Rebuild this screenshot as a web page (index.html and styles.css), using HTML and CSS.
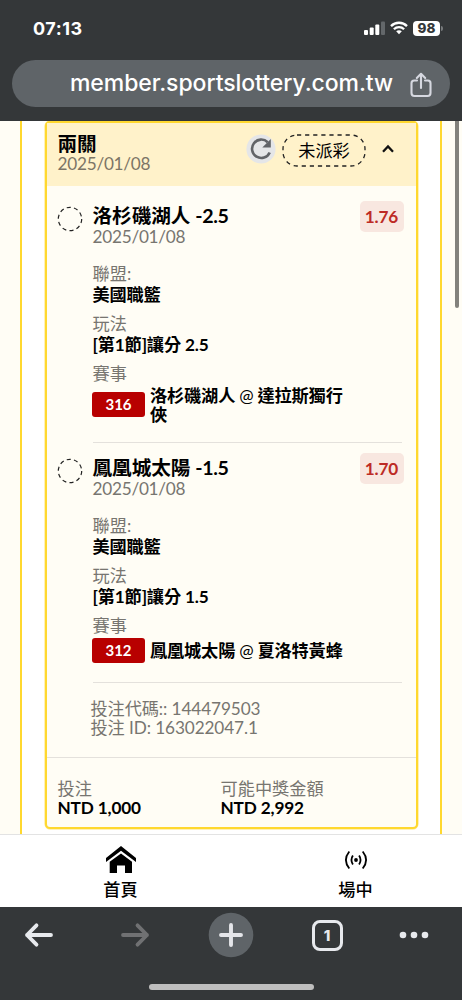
FILE: index.html
```html
<!DOCTYPE html>
<html lang="zh-Hant">
<head>
<meta charset="utf-8">
<title>member.sportslottery.com.tw</title>
<link rel="stylesheet" href="styles.css">
</head>
<body>
<div class="phone">
  <header class="browser-top">
    <div class="status">
      <span class="clock">07:13</span>
      <div class="status-icons">
        <svg class="signal" width="22" height="14" viewBox="0 0 22 14"><rect x="0" y="9" width="4" height="5" rx="1" fill="#fff"/><rect x="5.7" y="6.5" width="4" height="7.5" rx="1" fill="#fff"/><rect x="11.3" y="3.5" width="4" height="10.5" rx="1" fill="#fff"/><rect x="17" y="0.5" width="4" height="13.5" rx="1" fill="#63676a"/></svg>
        <svg class="wifi" width="18" height="14" viewBox="0 0 18 14" fill="none" stroke="#fff" stroke-width="2.3"><path d="M1 5.1C5.4 .6 12.6 .6 17 5.1"/><path d="M3.9 8.2C6.7 5.4 11.3 5.4 14.1 8.2"/><path d="M6.2 10.3C7.8 8.9 10.2 8.9 11.8 10.3L9 13.3Z" fill="#fff" stroke="none"/></svg>
        <span class="battery">98</span><i class="battery-tip"></i>
      </div>
    </div>
    <div class="url-bar">
      <span class="url">member.sportslottery.com.tw</span>
      <svg class="share" width="22" height="26" viewBox="0 0 22 26" fill="none" stroke="#d6d8e0" stroke-width="2.1" stroke-linecap="round" stroke-linejoin="round"><path d="M7 8.5H4.2Q1.5 8.500 1.500 11.200V21Q1.500 24 4.500 24H17.500Q20.500 24 20.500 21V11.200Q20.500 8.500 17.800 8.500H15"/><path d="M11 16V2M6.800 6L11 1.800L15.200 6"/></svg>
    </div>
  </header>

  <main class="page">
    <section class="panel">
      <article class="ticket">
        <div class="ticket-head">
          <div class="head-text"><div class="title">兩關</div><div class="date">2025/01/08</div></div>
          <svg class="refresh" width="30" height="30" viewBox="0 0 30 30"><circle cx="15" cy="15" r="14.600" fill="#e5e6e8"/><path d="M21.700 8.200A9.200 9.200 0 1 0 23.700 18.400" fill="none" stroke="#626468" stroke-width="2.600"/><path d="M24.800 5V13.500H16.300Z" fill="#626468"/></svg>
          <svg class="status-pill" width="84" height="33" viewBox="0 0 84 33"><rect x="1" y="1" width="82" height="31" rx="14" fill="none" stroke="#222" stroke-width="1.300" stroke-dasharray="4.200 3.900"/><text x="42" y="23" text-anchor="middle">未派彩</text></svg>
          <svg class="caret" width="14" height="10" viewBox="0 0 14 10"><path d="M2 7.700L7 2.500L12 7.700" fill="none" stroke="#111" stroke-width="2.300"/></svg>
        </div>

        <div class="leg">
          <svg class="dot" width="26" height="26" viewBox="0 0 26 26"><circle cx="13" cy="13" r="11.700" fill="none" stroke="#222" stroke-width="1.200" stroke-dasharray="4.100 3.250"/></svg>
          <div class="leg-body">
            <div class="leg-top"><div><div class="title">洛杉磯湖人 <span class="line">-2.5</span></div><div class="date">2025/01/08</div></div><span class="odds">1.76</span></div>
            <div class="field first"><div class="label">聯盟:</div><div class="value">美國職籃</div></div>
            <div class="field"><div class="label">玩法</div><div class="value">[第1節]讓分 2.5</div></div>
            <div class="field"><div class="label">賽事</div></div>
            <div class="match tall"><span class="code">316</span><span class="teams">洛杉磯湖人 <span class="at">@</span> 達拉斯獨行俠</span></div>
          </div>
        </div>

        <div class="leg">
          <svg class="dot" width="26" height="26" viewBox="0 0 26 26"><circle cx="13" cy="13" r="11.700" fill="none" stroke="#222" stroke-width="1.200" stroke-dasharray="4.100 3.250"/></svg>
          <div class="leg-body">
            <div class="leg-top"><div><div class="title">鳳凰城太陽 <span class="line">-1.5</span></div><div class="date">2025/01/08</div></div><span class="odds">1.70</span></div>
            <div class="field first"><div class="label">聯盟:</div><div class="value">美國職籃</div></div>
            <div class="field"><div class="label">玩法</div><div class="value">[第1節]讓分 1.5</div></div>
            <div class="field"><div class="label">賽事</div></div>
            <div class="match"><span class="code">312</span><span class="teams">鳳凰城太陽 <span class="at">@</span> 夏洛特黃蜂</span></div>
          </div>
        </div>

        <div class="ids"><div>投注代碼:: 144479503</div><div>投注 ID: 163022047.1</div></div>
        <div class="totals">
          <div class="total"><div class="label">投注</div><div class="value">NTD 1,000</div></div>
          <div class="total"><div class="label">可能中獎金額</div><div class="value">NTD 2,992</div></div>
        </div>
      </article>
    </section>
    <i class="scrollbar"></i>
  </main>

  <nav class="site-nav">
    <div class="nav-item">
      <svg width="32" height="28" viewBox="0 0 32 28"><path d="M16 0L31 12V16L16 4.800L1 16V12Z"/><path d="M16 7.500L27 15.700V27H20V19.500H12V27H4.700V15.700Z"/></svg>
      <span>首頁</span>
    </div>
    <div class="nav-item">
      <svg width="32" height="28" viewBox="0 0 32 28" fill="none" stroke="#000" stroke-width="1.800"><circle cx="16" cy="14" r="1.900" fill="#000" stroke="none"/><path d="M12.900 9.500Q10 14 12.900 18.500M19.100 9.500Q22 14 19.100 18.500M9.300 5.500Q2.500 14 9.300 22.500M22.700 5.500Q29.500 14 22.700 22.500"/></svg>
      <span>場中</span>
    </div>
  </nav>

  <footer class="browser-bottom">
    <div class="tools">
      <svg width="30" height="26" viewBox="0 0 30 26" fill="none" stroke="#e7e9ed" stroke-width="3.800" stroke-linecap="round" stroke-linejoin="round"><path d="M27 13H3M12.500 3.300L3 13L12.500 22.700"/></svg>
      <svg width="30" height="26" viewBox="0 0 30 26" fill="none" stroke="#707173" stroke-width="3.800" stroke-linecap="round" stroke-linejoin="round"><path d="M3 13H27M17.500 3.300L27 13L17.500 22.700"/></svg>
      <svg width="46" height="46" viewBox="0 0 46 46"><circle cx="23" cy="23" r="22.300" fill="#5f6468"/><path d="M23 13V33M13 23H33" stroke="#e4e5e9" stroke-width="3.900" stroke-linecap="round"/></svg>
      <span class="tabs">1</span>
      <svg width="30" height="10" viewBox="0 0 30 10" fill="#e7e9ed"><circle cx="4" cy="5" r="3.300"/><circle cx="15" cy="5" r="3.300"/><circle cx="26" cy="5" r="3.300"/></svg>
    </div>
    <i class="home-bar"></i>
  </footer>
</div>
</body>
</html>
```
FILE: styles.css
```css
* { box-sizing: border-box; }
body { margin: 0; }
.phone {
  width: 462px;
  height: 1000px;
  overflow: hidden;
  display: flex;
  flex-direction: column;
  font-family: Lato, "Noto Sans CJK TC", sans-serif;
  font-size: 17.2px;
  color: #000;
}
svg { display: block; flex: none; }

.browser-top { flex: none; height: 121px; padding: 18px 12px 0; background: #343739; }
.status { display: flex; height: 20px; padding: 0 7px 0 21px; align-items: center; justify-content: space-between; font-family: Inter, sans-serif; }
.clock { font-size: 18px; font-weight: 700; color: #fff; letter-spacing: 0.5px; }
.status-icons { display: flex; align-items: center; }
.wifi { margin: 0 5px 0 4px; }
.battery { width: 27px; height: 15px; border-radius: 4px; background: #fff; color: #343739; font-size: 13.5px; line-height: 15px; font-weight: 800; text-align: center; }
.battery-tip { width: 2px; height: 5px; margin-left: 1px; border-radius: 0 2px 2px 0; background: #777a7c; }
.url-bar { display: flex; align-items: center; justify-content: space-between; height: 47px; margin-top: 22px; padding: 0 18px 0 58px; border-radius: 24px; background: #5f6468; }
.url { font-family: Inter, sans-serif; font-size: 23px; font-weight: 500; line-height: 45px; color: #fff; letter-spacing: -0.06px; white-space: nowrap; }
.share { margin-top: 3px; }

.page { position: relative; flex: none; height: 713px; padding: 0 20px; background: #fffdf5; overflow: hidden; }
.panel { height: 713px; padding: 0 22.500px; border: solid #ffd82f; border-width: 0 2px; background: #fff; }
.scrollbar { position: absolute; top: 0; right: 3px; width: 4px; height: 187px; border-radius: 0 0 2px 2px; background: #83827d; }
.ticket { height: 708px; border: 2px solid #ffd82f; border-radius: 5px; background: #fffdf5; box-shadow: 0 0 0 0.500px #ffe370; }
.ticket-head { display: flex; height: 63px; padding: 0 20px 0 11px; background: #fff2ca; align-items: flex-start; }
.head-text { width: 188px; padding-top: 10px; }
.title { font-size: 19.600px; line-height: 21px; height: 21px; font-weight: 700; white-space: nowrap; }
.line { letter-spacing: -0.35px; }
.date { line-height: 21px; height: 21px; color: #777570; letter-spacing: -0.25px; }
.ticket-head .date { color: #7c7566; line-height: 19px; }
.refresh { margin: 11px 6px 0 0; }
.status-pill { margin-top: 11px; }
.status-pill text { font-size: 17.200px; font-family: Lato, "Noto Sans CJK TC", sans-serif; }
.caret { margin: 21px 0 0 15px; }

.leg { display: flex; padding: 19px 14px 0 9px; }
.leg + .leg { padding-top: 14px; }
.dot { margin: 1px 10px 0 1px; }
.leg-body { flex: 1; border-bottom: 1px solid #e4e1dc; }
.leg-top { display: flex; justify-content: space-between; margin-right: -2px; }
.odds { width: 44px; height: 31px; margin-top: -4px; border-radius: 5px; background: #f8e7e0; color: #bd2b25; font-weight: 700; line-height: 31px; text-align: center; letter-spacing: -0.15px; }
.label { height: 21px; line-height: 21px; color: #777570; }
.value { height: 21px; line-height: 21px; font-weight: 700; letter-spacing: -0.15px; }
.field { margin-top: 8px; }
.field.first { margin-top: 16px; }
.match { display: flex; align-items: center; gap: 5px; height: 45px; padding-bottom: 18px; margin: 1px 0 0 -0.500px; }
.match.tall { height: 58px; padding-bottom: 18px; margin-top: 0; }
.code { flex: none; width: 53px; height: 25px; border-radius: 3px; background: #b80000; color: #fff; font-size: 15px; font-weight: 700; line-height: 25px; text-align: center; }
.teams { width: 202px; font-weight: 700; line-height: 18.500px; letter-spacing: -0.15px; margin-top: 1px; }
.tall .teams { margin-top: 3px; }
.at { font-weight: 400; }

.ids { height: 75px; padding: 16px 0 0 44px; border-bottom: 1px solid #e4e1dc; line-height: 19px; color: #777570; letter-spacing: -0.1px; }
.totals { display: flex; padding: 21px 11px 0; }
.total { width: 163px; }
.totals .label { height: 19px; line-height: 19px; }
.totals .value { height: 19px; line-height: 19px; }

.site-nav { display: flex; flex: none; height: 73px; padding: 0 3px 0 3px; border-top: 1px solid #e3e3e3; background: #fff; }
.nav-item { width: 235px; display: flex; flex-direction: column; align-items: center; flex: none; padding-top: 11px; font-weight: 500; }
.nav-item span { margin-top: 4px; line-height: 24px; }

.browser-bottom { flex: none; height: 93px; background: #343739; }
.tools { display: grid; grid-template-columns: 96px 96px 96px 96px 78px; height: 56px; padding-right: 9px; align-items: center; justify-items: center; margin-left: -9px; }
.tabs { width: 31px; height: 31px; border: 3px solid #e7e9ed; border-radius: 8px; color: #e7e9ed; font: 800 15px/25px Inter, sans-serif; text-align: center; }
.home-bar { display: block; width: 165px; height: 6px; margin: 21px auto 0; border-radius: 3px; background: #bebebe; }
```
